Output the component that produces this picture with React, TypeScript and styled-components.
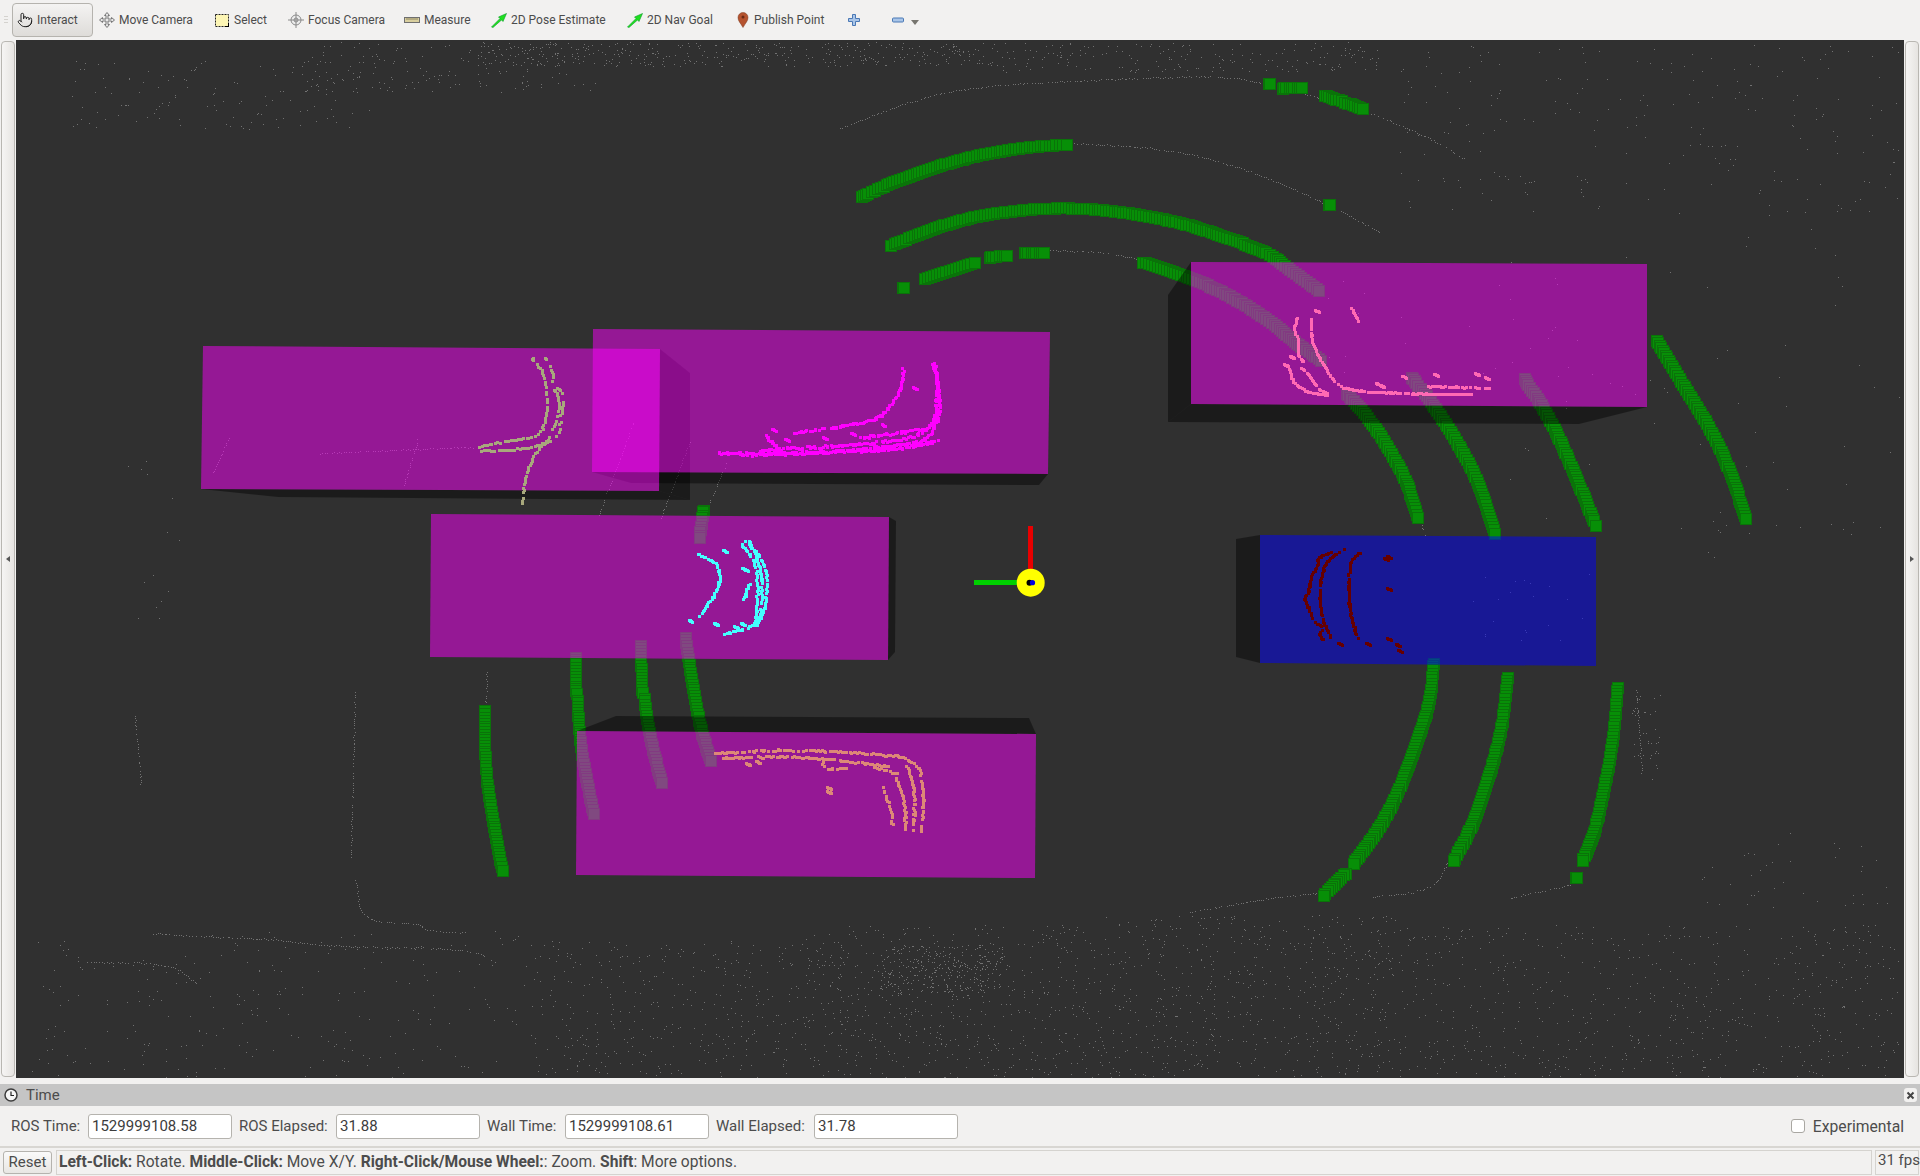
import styled, { createGlobalStyle } from "styled-components";
import { Pointer } from "lucide-react";

const GlobalStyle = createGlobalStyle`
  html, body {
    margin: 0;
    padding: 0;
    background: #f2f1f0;
  }
  * {
    box-sizing: border-box;
  }
`;

const Window = styled.div`
  display: flex;
  flex-direction: column;
  width: 1920px;
  height: 1176px;
  overflow: hidden;
  background: #f2f1f0;
  color: #4c4c4c;
  font-family: Roboto, "Liberation Sans", sans-serif;
`;

const Toolbar = styled.div`
  display: flex;
  align-items: center;
  flex: none;
  height: 40px;
  padding-left: 4px;
  font-size: 12px;
`;

const Grip = styled.div`
  width: 4px;
  height: 8px;
  margin-right: 4px;
  background: repeating-linear-gradient(#d4d2ce 0 1px, transparent 1px 3px);
`;

const ActiveTool = styled.div`
  display: flex;
  align-items: center;
  gap: 4px;
  width: 81px;
  height: 34px;
  margin-right: 6px;
  padding-left: 4px;
  border: 1px solid #b5b3ae;
  border-radius: 4px;
  background: linear-gradient(#f4f3f2, #dedcd9);
`;

const Tool = styled.div<{ $w: number }>`
  display: flex;
  align-items: center;
  gap: 4px;
  flex: none;
  width: ${(p) => p.$w}px;
`;

const Caret = styled.div`
  width: 0;
  height: 0;
  margin-left: 7px;
  margin-top: 4px;
  border-left: 4px solid transparent;
  border-right: 4px solid transparent;
  border-top: 5px solid #77756f;
`;

const Main = styled.div`
  display: flex;
  flex: none;
  height: 1038px;
`;

const SideHandle = styled.div`
  display: flex;
  align-items: center;
  justify-content: center;
  flex: none;
  width: 14px;
  margin: 1px;
  border: 1px solid #b9b7b2;
  border-radius: 4px;
  background: linear-gradient(90deg, #f6f5f4, #e6e4e1);
`;

const Arrow = styled.div<{ $right?: boolean }>`
  width: 0;
  height: 0;
  border-top: 3px solid transparent;
  border-bottom: 3px solid transparent;
  ${(p) =>
    p.$right
      ? "border-left: 4px solid #555;"
      : "border-right: 4px solid #555;"}
`;

const Viewport = styled.svg`
  display: block;
  flex: none;
  width: 1888px;
  height: 1038px;
  background: #303030;
`;

const TimePanel = styled.div`
  flex: none;
  margin-top: 6px;
`;

const TitleBar = styled.div`
  display: flex;
  align-items: center;
  height: 22px;
  padding: 0 3px 0 4px;
  background: #c5c5c5;
  font-size: 15px;
`;

const TitleText = styled.span`
  flex: 1;
  margin-left: 8px;
`;

const CloseButton = styled.div`
  display: flex;
  align-items: center;
  justify-content: center;
  width: 13px;
  height: 14px;
  border-radius: 3px;
  background: #f2f1f0;
`;

const TimeRow = styled.div`
  display: flex;
  align-items: center;
  height: 40px;
  padding: 0 16px 0 11px;
  font-size: 15px;
`;

const Label = styled.span<{ $w: number }>`
  flex: none;
  width: ${(p) => p.$w}px;
  margin-right: 8px;
  white-space: nowrap;
`;

const TimeInput = styled.div`
  flex: none;
  width: 144px;
  height: 25px;
  margin-right: 7px;
  padding: 0 3px;
  border: 1px solid #b5b3ae;
  border-radius: 3px;
  background: #fff;
  color: #3c3c3c;
  line-height: 23px;
`;

const Check = styled.div`
  flex: none;
  width: 14px;
  height: 14px;
  margin-left: auto;
  margin-right: 8px;
  border: 1px solid #a9a7a2;
  border-radius: 3px;
  background: #fff;
`;

const CheckLabel = styled.span`
  font-size: 15.7px;
`;

const StatusBar = styled.div`
  display: flex;
  align-items: center;
  flex: none;
  height: 30px;
  padding: 2px 1px 2px 3px;
  border-top: 2px solid #d8d6d2;
  font-size: 15px;
`;

const ResetButton = styled.div`
  flex: none;
  width: 49px;
  height: 23px;
  margin-right: 4px;
  border: 1px solid #b5b3ae;
  border-radius: 3px;
  background: linear-gradient(#fafafa, #e8e6e3);
  line-height: 21px;
  text-align: center;
`;

const Message = styled.div`
  flex: none;
  width: 1816px;
  height: 25px;
  margin-right: 3px;
  padding-left: 2px;
  border: 1px solid #d5d3cf;
  font-size: 15.6px;
  line-height: 23px;
`;

const Fps = styled.div`
  flex: none;
  width: 44px;
  height: 25px;
  padding-left: 2px;
  border: 1px solid #d5d3cf;
  line-height: 18px;
  white-space: nowrap;
`;

type Pt = [number, number];

// tiny seeded random so the cloud stays the same between runs
let seed = 4711;
const rnd = () => {
  seed = (seed * 16807) % 2147483647;
  return seed / 2147483647;
};

// chaikin corner cutting, the readings off the picture are coarse
const smooth = (line: Pt[], rounds = 2): Pt[] => {
  let out = line;
  for (let r = 0; r < rounds; r++) {
    const next: Pt[] = [out[0]];
    for (let i = 0; i < out.length - 1; i++) {
      const [x0, y0] = out[i];
      const [x1, y1] = out[i + 1];
      next.push([x0 * 0.75 + x1 * 0.25, y0 * 0.75 + y1 * 0.25]);
      next.push([x0 * 0.25 + x1 * 0.75, y0 * 0.25 + y1 * 0.75]);
    }
    next.push(out[out.length - 1]);
    out = next;
  }
  return out;
};

const sample = (line: Pt[], step: number): Pt[] => {
  const out: Pt[] = [];
  for (let i = 0; i < line.length - 1; i++) {
    const [x0, y0] = line[i];
    const [x1, y1] = line[i + 1];
    const n = Math.max(1, Math.round(Math.hypot(x1 - x0, y1 - y0) / step));
    for (let k = 0; k < n; k++) {
      out.push([x0 + ((x1 - x0) * k) / n, y0 + ((y1 - y0) * k) / n]);
    }
  }
  out.push(line[line.length - 1]);
  return out;
};

const dotsAlong = (line: Pt[], step: number, jitter: number, size: number) => {
  let d = "";
  for (const [x0, y0] of sample(smooth(line), step)) {
    if (rnd() < 0.12) continue;
    const x = Math.round(x0 + (rnd() - 0.5) * jitter);
    const y = Math.round(y0 + (rnd() - 0.5) * jitter);
    d += `M${x} ${y}h${size}v${size}h-${size}z`;
  }
  return d;
};

const noise = (x: number, y: number, w: number, h: number, n: number) => {
  let d = "";
  for (let i = 0; i < n; i++) {
    const px = Math.round(x + rnd() * w);
    const py = Math.round(y + rnd() * h);
    d += `M${px} ${py}h${rnd() < 0.2 ? 2 : 1}v1h-1z`;
  }
  return d;
};

const noiseBoxes: [number, number, number, number, number][] = [
  [30, 930, 500, 147, 240],
  [530, 940, 270, 137, 360],
  [800, 925, 300, 152, 620],
  [880, 945, 120, 50, 260],
  [1100, 915, 300, 162, 620],
  [1400, 925, 500, 152, 640],
  [70, 60, 300, 70, 120],
  [300, 42, 300, 50, 170],
  [480, 42, 500, 24, 380],
  [980, 42, 400, 30, 200],
  [1400, 45, 500, 170, 230],
  [1500, 220, 400, 300, 50],
  [1630, 690, 30, 90, 40],
  [1700, 830, 200, 80, 40],
  [120, 440, 60, 180, 14],
  [1680, 520, 200, 40, 16],
  [1280, 270, 300, 130, 26],
  [1470, 570, 120, 70, 20],
];

const thinLines: Pt[][] = [
  [[840, 128], [913, 100], [970, 87], [1070, 81], [1165, 77], [1223, 76], [1265, 83], [1366, 110], [1440, 143], [1463, 159]],
  [[1068, 143], [1165, 148], [1242, 167], [1324, 202], [1380, 232]],
  [[1043, 250], [1108, 252], [1142, 260]],
  [[1190, 912], [1268, 898], [1320, 893]],
  [[1373, 897], [1433, 890], [1447, 863]],
  [[1510, 898], [1570, 885]],
  [[356, 880], [361, 922], [422, 923], [422, 930], [465, 933]],
  [[153, 933], [202, 937], [263, 938], [337, 947], [471, 948], [496, 963]],
  [[86, 962], [171, 963], [196, 983]],
  [[135, 716], [141, 784]],
  [[355, 692], [351, 857]],
  [[487, 672], [485, 710]],
  [[633, 423], [599, 515]],
  [[690, 441], [661, 518]],
  [[728, 458], [708, 507]],
  [[320, 453], [473, 447]],
  [[229, 438], [213, 473]],
  [[418, 440], [403, 488]],
  [[1636, 690], [1642, 770]],
  [[1420, 520], [1425, 535]],
];

const cloudPath =
  noiseBoxes.map((b) => noise(...b)).join("") +
  thinLines.map((l) => dotsAlong(l, 2.4, 1.2, 1)).join("");

type Cloud = { color: string; size: number; step: number; jitter: number; lines: Pt[][]; dots?: Pt[] };

const clouds: Cloud[] = [
  {
    color: "#a8a87c",
    size: 3,
    step: 2.6,
    jitter: 1.2,
    lines: [
      [[531, 357], [542, 370], [547, 400], [544, 423], [536, 435], [519, 438], [478, 445]],
      [[544, 357], [553, 373], [550, 383], [559, 397], [556, 417], [547, 440], [536, 448], [524, 473], [521, 502]],
      [[556, 387], [564, 395], [559, 417], [559, 433], [542, 443], [519, 448], [481, 450]],
    ],
  },
  {
    color: "#ff00ff",
    size: 3,
    step: 1.6,
    jitter: 2.4,
    lines: [
      [[717, 452], [811, 452], [897, 445], [932, 438], [940, 400], [932, 362]],
      [[740, 454], [830, 451], [900, 448], [936, 440]],
      [[760, 449], [850, 444], [930, 435], [937, 395], [934, 365]],
      [[902, 367], [900, 390], [883, 413], [872, 420], [794, 432]],
      [[860, 437], [890, 432], [925, 428]],
      [[765, 435], [775, 445]],
    ],
    dots: [[912, 386], [771, 428], [784, 438], [822, 436], [850, 432], [873, 444], [900, 430], [880, 423]],
  },
  {
    color: "#44ffff",
    size: 3,
    step: 1.8,
    jitter: 1.6,
    lines: [
      [[697, 553], [717, 562], [720, 583], [699, 615]],
      [[745, 540], [763, 560], [767, 587], [760, 623], [722, 633]],
      [[740, 543], [754, 560], [757, 587], [754, 623]],
      [[748, 540], [758, 560], [762, 587], [757, 623]],
      [[748, 583], [743, 598]],
    ],
    dots: [[722, 549], [741, 567], [688, 619], [713, 622], [733, 625], [743, 568], [740, 622]],
  },
  {
    color: "#dd8877",
    size: 3,
    step: 2,
    jitter: 1.8,
    lines: [
      [[714, 752], [787, 748], [861, 752], [916, 757], [923, 790], [920, 830]],
      [[722, 757], [787, 755], [828, 758], [889, 765]],
      [[906, 765], [914, 790], [912, 828]],
      [[895, 777], [904, 800], [904, 828]],
      [[881, 787], [891, 810], [891, 825]],
      [[822, 757], [822, 768], [844, 767]],
      [[872, 766], [895, 772]],
    ],
    dots: [[826, 786], [826, 790], [745, 762], [755, 760]],
  },
  {
    color: "#ff69b4",
    size: 3,
    step: 1.8,
    jitter: 1,
    lines: [
      [[1296, 317], [1292, 330], [1298, 338], [1296, 353], [1302, 360]],
      [[1310, 318], [1310, 340], [1322, 363], [1336, 385], [1356, 390], [1419, 393], [1470, 393]],
      [[1288, 367], [1292, 383], [1312, 393], [1326, 394]],
      [[1300, 367], [1308, 373], [1316, 387], [1326, 392]],
      [[1350, 307], [1358, 321]],
      [[1427, 385], [1488, 387]],
    ],
    dots: [[1314, 309], [1375, 382], [1379, 384], [1401, 375], [1433, 373], [1474, 372], [1484, 376], [1289, 355], [1283, 363]],
  },
  {
    color: "#660000",
    size: 3,
    step: 1.6,
    jitter: 1.4,
    lines: [
      [[1330, 551], [1318, 555], [1315, 567], [1310, 575], [1307, 593], [1302, 596], [1310, 613], [1312, 620], [1323, 627], [1317, 632], [1322, 638]],
      [[1343, 549], [1327, 557], [1320, 573], [1318, 600], [1323, 623], [1330, 637]],
      [[1358, 552], [1348, 562], [1347, 600], [1352, 623], [1357, 638]],
    ],
    dots: [[1383, 557], [1386, 555], [1386, 587], [1337, 642], [1365, 642], [1386, 637], [1395, 643], [1397, 649]],
  },
];

const boxes: { color: string; pts: string }[] = [
  { color: "#ff00ff", pts: "203,346 660,349 659,491 201,489" },
  { color: "#ff00ff", pts: "593,329 1050,332 1048,474 592,472" },
  { color: "#ff00ff", pts: "431,514 889,517 888,660 430,657" },
  { color: "#ff00ff", pts: "577,731 1036,734 1035,878 576,875" },
  { color: "#ff00ff", pts: "1191,262 1647,264 1647,407 1191,404" },
  { color: "#0000ff", pts: "1260,535 1596,537 1596,666 1260,663" },
];

const shadows = [
  "201,489 278,497 690,500 659,491",
  "660,349 690,373 690,500 659,491",
  "592,472 631,483 1039,485 1048,474",
  "889,517 896,521 895,652 888,660",
  "577,731 616,716 1029,718 1036,734",
  "1191,262 1168,295 1168,422 1191,404",
  "1168,422 1579,424 1647,407 1191,404",
  "1260,535 1236,539 1236,657 1260,663",
];

const strips: Pt[][] = [
  [[861, 196], [897, 180], [955, 160], [1012, 148], [1066, 144]],
  [[890, 245], [955, 220], [1012, 210], [1070, 207], [1127, 212], [1184, 223], [1226, 237], [1261, 250], [1274, 257], [1295, 273], [1318, 290]],
  [[902, 287], [903, 287]],
  [[924, 278], [974, 262]],
  [[989, 257], [1006, 255]],
  [[1024, 252], [1043, 252]],
  [[1142, 262], [1190, 277], [1229, 295], [1269, 320], [1296, 343], [1320, 360]],
  [[1268, 83], [1269, 83]],
  [[1282, 88], [1301, 87]],
  [[1324, 95], [1362, 108]],
  [[1328, 204], [1329, 204]],
  [[1346, 393], [1371, 420], [1395, 460], [1407, 483], [1417, 517]],
  [[1411, 377], [1435, 407], [1462, 450], [1478, 483], [1494, 533]],
  [[1524, 378], [1545, 410], [1569, 460], [1595, 525]],
  [[1656, 340], [1680, 380], [1711, 430], [1731, 473], [1745, 518]],
  [[1433, 663], [1430, 700], [1420, 733], [1400, 787], [1380, 827], [1353, 863]],
  [[1345, 873], [1323, 895]],
  [[1507, 677], [1502, 727], [1487, 783], [1470, 830], [1453, 860]],
  [[1617, 687], [1613, 740], [1603, 793], [1593, 837], [1582, 860]],
  [[1575, 877], [1576, 877]],
  [[484, 710], [485, 767], [491, 813], [502, 870]],
  [[575, 657], [576, 693]],
  [[577, 700], [579, 733], [583, 763], [593, 813]],
  [[640, 645], [642, 692]],
  [[644, 698], [648, 730], [661, 782]],
  [[685, 637], [697, 717], [710, 760]],
  [[703, 510], [699, 537]],
];

// the strips are rows of small cube markers
const CUBE = 11;

function Scene() {
  return (
    <Viewport viewBox="16 40 1888 1038">
      <path d={cloudPath} fill="#727272" shapeRendering="crispEdges" />
      {strips.map((s, i) => (
        <g key={i} fill="#078f07" stroke="#0a7309" strokeWidth={1} shapeRendering="crispEdges">
          {sample(smooth(s), 3).map(([x, y], k) => (
            <rect key={k} x={Math.round(x - CUBE / 2)} y={Math.round(y - CUBE / 2)} width={CUBE} height={CUBE} />
          ))}
        </g>
      ))}
      {shadows.map((pts) => (
        <polygon key={pts} points={pts} fill="#000" fillOpacity={0.42} />
      ))}
      {boxes.map((b) => (
        <polygon key={b.pts} points={b.pts} fill={b.color} fillOpacity={0.49} />
      ))}
      {clouds.map((c) => (
        <path
          key={c.color}
          fill={c.color}
          shapeRendering="crispEdges"
          d={
            c.lines.map((l) => dotsAlong(l, c.step, c.jitter, c.size)).join("") +
            (c.dots ?? []).map((p) => dotsAlong([p, [p[0] + 4, p[1] + 2]], 2, 0.5, c.size)).join("")
          }
        />
      ))}
      <rect x={1028} y={526} width={5} height={46} fill="#e80000" />
      <rect x={974} y={580} width={46} height={5} fill="#00d000" />
      <circle cx={1030.7} cy={582.7} r={14} fill="#ffff00" />
      <circle cx={1029.5} cy={582.7} r={3} fill="#000" />
      <circle cx={1032.5} cy={582.7} r={2.6} fill="#0000e0" />
    </Viewport>
  );
}

const MoveIcon = () => (
  <svg width="16" height="16" viewBox="0 0 16 16" fill="#e8e8e8" stroke="#777" strokeWidth="1">
    <path d="M8 .5 10.5 3.5H9V7h3.5V5.5L15.5 8l-3 2.5V9H9v3.5h1.5L8 15.5 5.5 12.5H7V9H3.5v1.5L.5 8l3-2.5V7H7V3.5H5.5z" />
  </svg>
);

const SelectIcon = () => (
  <svg width="16" height="16" viewBox="0 0 16 16">
    <rect x="1.5" y="2.5" width="13" height="12" fill="#fdf6b5" stroke="#222" strokeDasharray="2 1" />
    <path d="M11 15h4v-4h-1v3h-3z" fill="#000" />
  </svg>
);

const FocusIcon = () => (
  <svg width="16" height="16" viewBox="0 0 16 16" fill="none" stroke="#8a8a8a">
    <circle cx="8" cy="8" r="5" fill="#ececec" />
    <circle cx="8" cy="8" r="2" />
    <path d="M8 0v16M0 8h16" />
  </svg>
);

const MeasureIcon = () => (
  <svg width="16" height="16" viewBox="0 0 16 16">
    <rect x=".5" y="5.5" width="15" height="5" fill="#d9cf9f" stroke="#6f6f6f" />
    <path d="M3 6v2M5 6v2M7 6v2M9 6v2M11 6v2M13 6v2" stroke="#8d8560" />
  </svg>
);

const GreenArrow = () => (
  <svg width="16" height="16" viewBox="0 0 16 16">
    <path d="M.5 15 9 6.5 7.5 5l8-3.5L12 9.5 10.5 8 2 15.5z" fill="#1fe01f" stroke="#0a9a2a" strokeWidth=".6" />
  </svg>
);

const PinIcon = () => (
  <svg width="14" height="16" viewBox="0 0 14 16">
    <path d="M7 15.500C4.500 11 2 9 2 5.500a5 5 0 0 1 10 0C12 9 9.500 11 7 15.500z" fill="#b5532f" stroke="#7a3a20" strokeWidth=".5" />
    <circle cx="7" cy="5" r="1.500" fill="#6a2a15" />
  </svg>
);

const PlusIcon = () => (
  <svg width="12" height="12" viewBox="0 0 12 12">
    <path d="M4.500.5h3v4h4v3h-4v4h-3v-4h-4v-3h4z" fill="#a9c5e8" stroke="#4a78b5" />
  </svg>
);

const MinusIcon = () => (
  <svg width="12" height="12" viewBox="0 0 12 12">
    <rect x=".5" y="4" width="11" height="4" rx="1" fill="#a9c5e8" stroke="#4a78b5" />
  </svg>
);

const ClockIcon = () => (
  <svg width="14" height="14" viewBox="0 0 14 14">
    <circle cx="7" cy="7" r="6" fill="#f6f6f6" stroke="#3c3c3c" strokeWidth="1.500" />
    <path d="M7 3.500V7.500H10" fill="none" stroke="#222" strokeWidth="1.200" />
  </svg>
);

const CloseIcon = () => (
  <svg width="9" height="9" viewBox="0 0 9 9">
    <path d="M1.500 1.500l6 6m0-6l-6 6" stroke="#444" strokeWidth="2" />
  </svg>
);

export default function App() {
  return (
    <Window>
      <GlobalStyle />
      <Toolbar>
        <Grip />
        <ActiveTool>
          <Pointer size={16} color="#222" strokeWidth={1.5} />
          Interact
        </ActiveTool>
        <Tool $w={115}>
          <MoveIcon />
          Move Camera
        </Tool>
        <Tool $w={74}>
          <SelectIcon />
          Select
        </Tool>
        <Tool $w={116}>
          <FocusIcon />
          Focus Camera
        </Tool>
        <Tool $w={87}>
          <MeasureIcon />
          Measure
        </Tool>
        <Tool $w={136}>
          <GreenArrow />
          2D Pose Estimate
        </Tool>
        <Tool $w={109}>
          <GreenArrow />
          2D Nav Goal
        </Tool>
        <Tool $w={112}>
          <PinIcon />
          Publish Point
        </Tool>
        <Tool $w={44}>
          <PlusIcon />
        </Tool>
        <MinusIcon />
        <Caret />
      </Toolbar>
      <Main>
        <SideHandle>
          <Arrow />
        </SideHandle>
        <Scene />
        <SideHandle>
          <Arrow $right />
        </SideHandle>
      </Main>
      <TimePanel>
        <TitleBar>
          <ClockIcon />
          <TitleText>Time</TitleText>
          <CloseButton>
            <CloseIcon />
          </CloseButton>
        </TitleBar>
        <TimeRow>
          <Label $w={69}>ROS Time:</Label>
          <TimeInput>1529999108.58</TimeInput>
          <Label $w={89}>ROS Elapsed:</Label>
          <TimeInput>31.88</TimeInput>
          <Label $w={70}>Wall Time:</Label>
          <TimeInput>1529999108.61</TimeInput>
          <Label $w={90}>Wall Elapsed:</Label>
          <TimeInput>31.78</TimeInput>
          <Check />
          <CheckLabel>Experimental</CheckLabel>
        </TimeRow>
      </TimePanel>
      <StatusBar>
        <ResetButton>Reset</ResetButton>
        <Message>
          <b>Left-Click:</b> Rotate. <b>Middle-Click:</b> Move X/Y.{" "}
          <b>Right-Click/Mouse Wheel:</b>: Zoom. <b>Shift</b>: More options.
        </Message>
        <Fps>31 fps</Fps>
      </StatusBar>
    </Window>
  );
}
